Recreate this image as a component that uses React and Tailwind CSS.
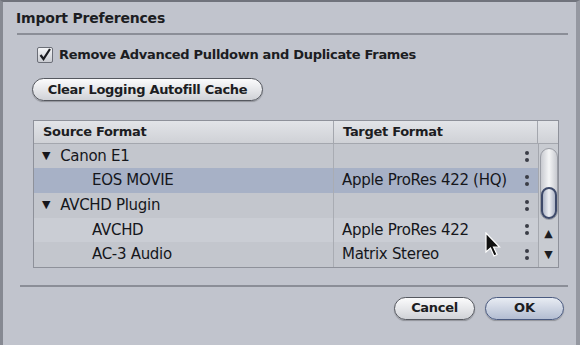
import React from 'react';

const rows = [
  { name: 'Canon E1', group: true, target: '' },
  { name: 'EOS MOVIE', target: 'Apple ProRes 422 (HQ)', selected: true },
  { name: 'AVCHD Plugin', group: true, target: '' },
  { name: 'AVCHD', target: 'Apple ProRes 422' },
  { name: 'AC-3 Audio', target: 'Matrix Stereo' },
];

const Dots = () => (
  <div className="flex flex-col gap-[3px] items-center">
    <span className="w-[4px] h-[4px] rounded-full bg-[#3a3d46]" />
    <span className="w-[4px] h-[4px] rounded-full bg-[#3a3d46]" />
  </div>
);

const App = () => {
  return (
    <div
      className="w-[580px] h-[345px] bg-[#c1c4cd] border-t-2 border-t-[#70737c] border-l-[3px] border-l-[#868992] border-r-[4px] border-r-[#9598a1] flex flex-col text-[#1c1d22] overflow-hidden"
      style={{ fontFamily: '"DejaVu Sans", Verdana, sans-serif' }}
    >
      <div className="pl-[13px] pt-[7px] text-[14px] font-bold leading-[18px] tracking-[-0.2px]">
        Import Preferences
      </div>
      <div className="ml-[14px] mr-[8px] mt-[6px] h-[2px] bg-[#8b8e97]" />

      <div className="pl-[34px] pt-[10px] flex items-center gap-[6px]">
        <div className="w-[16px] h-[16px] border border-[#6b6e77] bg-gradient-to-b from-[#f4f5f7] to-[#c9cbd1] rounded-[2px] flex items-center justify-center">
          <svg width="14" height="14" viewBox="0 0 14 14">
            <path d="M2.5 7 L5.5 11 L12 1" fill="none" stroke="#1a1b20" strokeWidth="2.2" />
          </svg>
        </div>
        <span className="text-[13px] font-bold tracking-[-0.3px]">
          Remove Advanced Pulldown and Duplicate Frames
        </span>
      </div>

      <div className="pl-[29px] pt-[12px]">
        <button className="h-[23px] w-[231px] rounded-full border-[1.5px] border-[#55585f] bg-gradient-to-b from-[#fbfbfc] via-[#e6e7ea] to-[#d0d2d7] text-[13px] font-bold tracking-[-0.3px] shadow-[0_1px_1px_rgba(0,0,0,0.25)]">
          Clear Logging Autofill Cache
        </button>
      </div>

      <div className="ml-[30px] mt-[19px] w-[526px] border border-[#8e919a] bg-[#c6c9d0] flex flex-col">
        <div className="flex h-[23px] bg-gradient-to-b from-[#e2e4e8] to-[#cfd1d6] border-b border-[#a4a7ae] text-[13px] font-bold tracking-[-0.3px]">
          <div className="w-[300px] pl-[9px] flex items-center border-r border-[#a4a7ae]">Source Format</div>
          <div className="w-[204px] pl-[9px] flex items-center border-r border-[#a4a7ae]">Target Format</div>
          <div className="flex-1" />
        </div>
        <div className="flex">
          <div className="w-[504px] flex flex-col">
            {rows.map((r, i) => (
              <div
                key={r.name}
                className={`flex h-[24.6px] text-[15px] tracking-[-0.3px] text-[#15161b] ${
                  r.selected ? 'bg-[#a7b1c6]' : i % 2 === 0 ? 'bg-[#c3c6cd]' : 'bg-[#cacdd4]'
                }`}
              >
                <div className="w-[300px] flex items-center border-r border-[#a9acb3]">
                  {r.group ? (
                    <span className="pl-[8px] flex items-center gap-[10px]">
                      <span className="text-[11px]">▼</span>
                      {r.name}
                    </span>
                  ) : (
                    <span className="pl-[58px]">{r.name}</span>
                  )}
                </div>
                <div className="flex-1 flex items-center justify-between pl-[8px] pr-[9px]">
                  <span>{r.target}</span>
                  <Dots />
                </div>
              </div>
            ))}
          </div>
          <div className="flex-1 border-l border-[#a4a7ae] bg-[#c8cbd1] flex flex-col items-center pt-[4px]">
            <div className="w-[18px] h-[72px] rounded-full border border-[#9a9da5] bg-gradient-to-r from-[#c8cad0] via-[#f4f5f6] to-[#c8cad0] flex flex-col justify-end">
              <div className="h-[32px] rounded-full border-[2.5px] border-[#3e4a6a] bg-gradient-to-r from-[#aeb5c6] via-[#eef0f4] to-[#aeb5c6]" />
            </div>
            <div className="mt-[8px] text-[11px] leading-[12px]">▲</div>
            <div className="mt-[9px] text-[11px] leading-[12px]">▼</div>
          </div>
        </div>
      </div>

      <div className="ml-[17px] mr-[8px] mt-[17px] h-[2px] bg-[#8b8e97]" />

      <div className="flex justify-end gap-[10px] pr-[12px] pt-[10px]">
        <button className="h-[23px] w-[81px] rounded-full border-[1.5px] border-[#55585f] bg-gradient-to-b from-[#fbfbfc] via-[#e6e7ea] to-[#d0d2d7] text-[13px] font-bold tracking-[-0.3px] shadow-[0_1px_1px_rgba(0,0,0,0.25)]">
          Cancel
        </button>
        <button className="h-[23px] w-[79px] rounded-full border-[1.5px] border-[#4a5a80] bg-gradient-to-b from-[#e8ecf3] via-[#cdd4e2] to-[#b3bdd2] text-[13px] font-bold shadow-[0_1px_1px_rgba(0,0,0,0.25)]">
          OK
        </button>
      </div>

      <svg
        className="absolute left-[484px] top-[232px]"
        width="20"
        height="28"
        viewBox="0 0 20 28"
      >
        <path d="M2 1 L2 20 L6.5 16 L10 24 L13 22.5 L9.5 15 L15.5 15 Z" fill="#111" stroke="#fff" strokeWidth="1.2" />
      </svg>
    </div>
  );
};

export default App;
